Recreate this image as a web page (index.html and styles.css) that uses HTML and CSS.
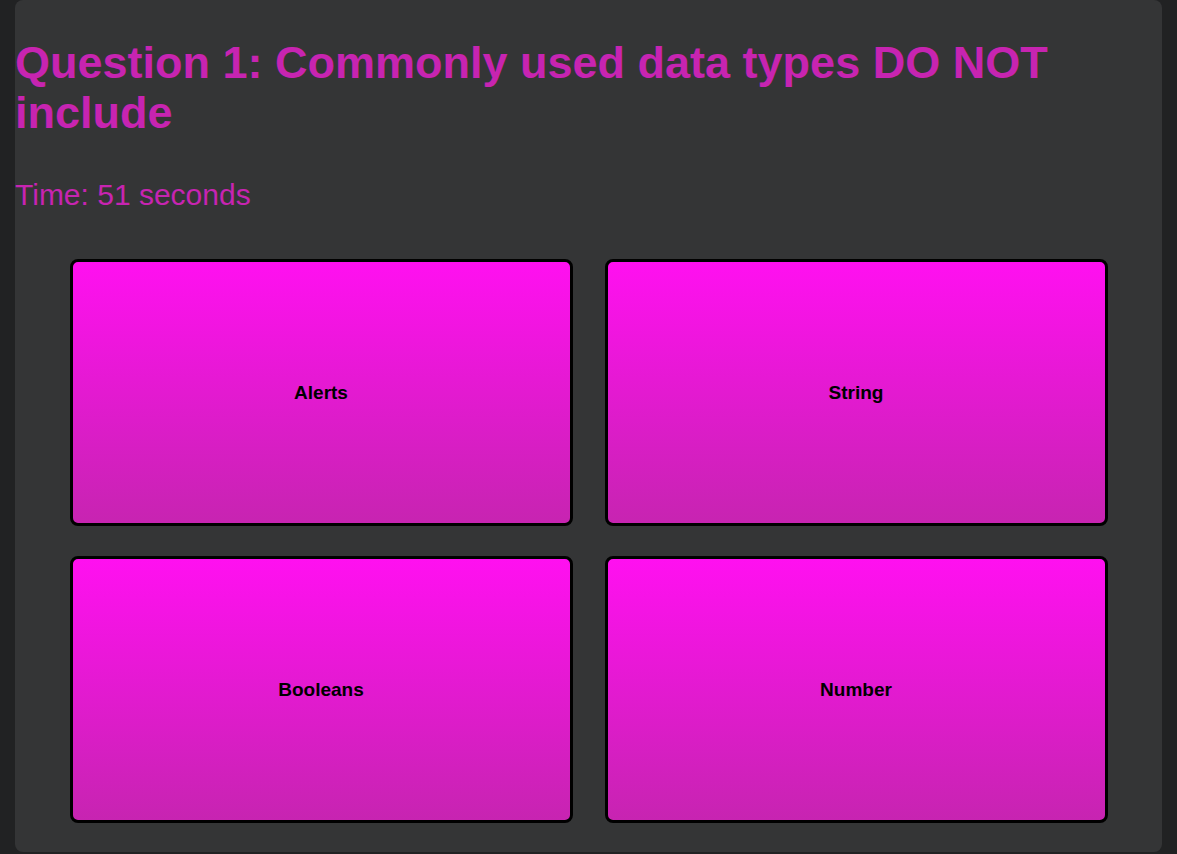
FILE: index.html
```html
<!DOCTYPE html>
<html lang="en">
<head>
<meta charset="utf-8">
<title>Quiz</title>
<link rel="stylesheet" href="styles.css">
</head>
<body>
<main class="quiz">
  <h1 class="question">Question 1: Commonly used data types DO NOT include</h1>
  <p class="timer">Time: 51 seconds</p>
  <div class="answers">
    <button class="answer">Alerts</button>
    <button class="answer">String</button>
    <button class="answer">Booleans</button>
    <button class="answer">Number</button>
  </div>
</main>
</body>
</html>
```
FILE: styles.css
```css
html, body {
  margin: 0;
  padding: 0;
}
body {
  background: #212223;
  font-family: "Liberation Sans", Arial, sans-serif;
  padding: 0 15px;
}
.quiz {
  background: #343536;
  border-radius: 8px;
  height: 852px;
  box-sizing: border-box;
  padding-top: 38px;
}
.question {
  margin: 0;
  color: #c724b1;
  font-size: 45px;
  font-weight: bold;
  line-height: 50px;
}
.timer {
  margin: 41px 0 0 0;
  color: #c724b1;
  font-size: 30px;
  line-height: 32px;
}
.answers {
  display: grid;
  grid-template-columns: 503px 503px;
  grid-template-rows: 267px 267px;
  column-gap: 32px;
  row-gap: 30px;
  justify-content: center;
  margin-top: 48px;
}
.answer {
  border: 3px solid #000;
  border-radius: 8px;
  background: linear-gradient(to bottom, #ff10f0, #c724b1);
  color: #000;
  font-family: "Liberation Sans", Arial, sans-serif;
  font-size: 19px;
  font-weight: bold;
  padding: 0;
  margin: 0;
}
```
